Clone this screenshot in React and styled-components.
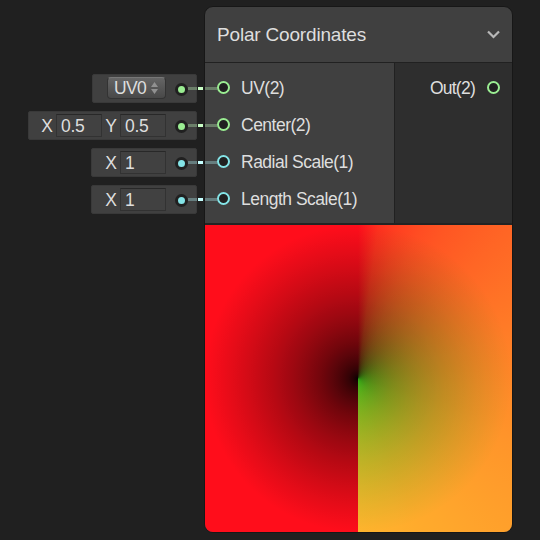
import React from 'react';
import styled, { createGlobalStyle } from 'styled-components';

const GREEN = { port: '#9aed92', wire: '#6b7f69', bright: '#caffc6' };
const CYAN = { port: '#84e4e7', wire: '#667d7e', bright: '#c5ffff' };

const GlobalStyle = createGlobalStyle`
  * { box-sizing: border-box; }
  body {
    margin: 0;
    background: #202020;
    overflow: hidden;
  }
`;

const Canvas = styled.main`
  display: flex;
  align-items: flex-start;
  width: 540px;
  height: 540px;
  padding-top: 6px;
  background: #202020;
  color: #dedede;
  font-family: "Liberation Sans", Arial, sans-serif;
  font-size: 17.5px;
  line-height: 20px;
  white-space: nowrap;
`;

const Inputs = styled.div`
  display: flex;
  flex-direction: column;
  align-items: flex-end;
  gap: 8px;
  width: 204px;
  padding-top: 68px;
`;

const InputRow = styled.div`
  display: flex;
  align-items: center;
  height: 29px;
`;

const InputPanel = styled.div`
  display: flex;
  align-items: center;
  justify-content: flex-end;
  width: ${({ $width }) => $width}px;
  height: 29px;
  border: 1px solid #393939;
  border-radius: 2px;
  background: #404040;
`;

const AxisLabel = styled.span`
  width: 12px;
  margin-right: 3px;
  text-align: center;
`;

const Field = styled.span`
  width: 46px;
  height: 23px;
  margin-right: ${({ $gap }) => $gap}px;
  padding-left: 4px;
  border: 1px solid #323232;
  border-top-color: #282828;
  background: #414141;
  line-height: 22px;
  letter-spacing: -0.3px;
`;

const Dropdown = styled.span`
  display: flex;
  align-items: center;
  justify-content: space-between;
  width: 59px;
  height: 22px;
  margin: 0 9px 1px 0;
  padding: 0 7px 0 6px;
  border: 1px solid #333;
  border-top-color: #777;
  border-radius: 4px;
  background: linear-gradient(#656565, #484848);
  letter-spacing: -0.6px;
`;

const Plug = styled.span`
  flex: none;
  width: 13px;
  height: 13px;
  margin: 1px 8px 0 0;
  border: 3px solid #202020;
  border-radius: 50%;
  background: ${({ $color }) => $color};
`;

const Wire = styled.span`
  flex: none;
  width: ${({ $width }) => $width}px;
  height: 3px;
  background: ${({ $color }) => $color};
`;

const PanelWire = styled(Wire)`
  margin-left: -9px;
`;

const PortWire = styled(Wire)`
  margin-top: 2px;
`;

const WireGap = styled.span`
  width: 1px;
`;

const Node = styled.section`
  width: 309px;
  height: 527px;
  border: 1px solid #171717;
  border-radius: 9px;
  background: #404040;
  overflow: hidden;
`;

const Header = styled.header`
  display: flex;
  align-items: center;
  justify-content: space-between;
  height: 56px;
  padding: 0 12px 0 12px;
  border-bottom: 1px solid #212121;
  font-size: 19px;
`;

const Title = styled.span`
  letter-spacing: -0.18px;
`;

const Ports = styled.div`
  display: flex;
  height: 162px;
  border-bottom: 2px solid #232323;
`;

const InPorts = styled.div`
  flex: 1;
  padding-top: 6px;
`;

const OutPorts = styled.div`
  width: 118px;
  padding: 6px 12px 0 0;
  border-left: 1px solid #212121;
  background: #2e2e2e;
`;

const PortRow = styled.div`
  display: flex;
  align-items: center;
  justify-content: ${({ $end }) => ($end ? 'flex-end' : 'flex-start')};
  height: 37px;
`;

const Ring = styled.span`
  flex: none;
  width: 13px;
  height: 13px;
  border: 2px solid ${({ $color }) => $color};
  border-radius: 50%;
  background: #212121;
`;

const PortLabel = styled.span`
  margin: ${({ $end }) => ($end ? '0 12px 0 0' : '0 0 0 11px')};
  letter-spacing: ${({ $end }) => ($end ? '-0.75px' : '-0.5px')};
`;

const srgb = (v) => (v <= 0.0031308 ? v * 12.92 : 1.055 * v ** (1 / 2.4) - 0.055);

const angleStops = Array.from({ length: 25 }, (_, i) => {
  const g = srgb((i / 24) * 0.5);
  return `rgb(${Math.round(g * 50)}, ${Math.round(g * 240)}, ${Math.round(g * 28)}) ${i * 7.5}deg`;
}).join(', ');

const radiusStops = Array.from({ length: 33 }, (_, i) => {
  const t = (i / 32) ** 2;
  const r = t ** 0.57;
  return `rgb(${Math.round(r * 255)}, ${Math.round(r * 13)}, ${Math.round(r * 27)}) ${(t * 100).toFixed(2)}%`;
}).join(', ');

const Preview = styled.div`
  height: 307px;
  background:
    conic-gradient(from 0deg at 153px 153.5px, ${angleStops}, #000 180deg),
    radial-gradient(circle 153.5px at 153px 153.5px, ${radiusStops});
  background-blend-mode: screen;
`;

const inputs = [
  { label: 'UV(2)', color: GREEN, width: 105, option: 'UV0' },
  { label: 'Center(2)', color: GREEN, width: 169, fields: [['X', '0.5'], ['Y', '0.5']] },
  { label: 'Radial Scale(1)', color: CYAN, width: 106, fields: [['X', '1']] },
  { label: 'Length Scale(1)', color: CYAN, width: 106, fields: [['X', '1']] },
];

export default function App() {
  return (
    <>
      <GlobalStyle />
      <Canvas>
        <Inputs>
          {inputs.map(({ label, color, width, option, fields = [] }) => (
            <InputRow key={label}>
              <InputPanel $width={width}>
                {option && (
                  <Dropdown>
                    {option}
                    <svg width="7" height="12" viewBox="0 0 7 12" fill="#919191">
                      <path d="M3.5 0 7 5H0ZM0 7h7l-3.5 5Z" />
                    </svg>
                  </Dropdown>
                )}
                {fields.map(([axis, value], i) => (
                  <React.Fragment key={axis}>
                    <AxisLabel>{axis}</AxisLabel>
                    <Field $gap={i === fields.length - 1 ? 9 : 3}>{value}</Field>
                  </React.Fragment>
                ))}
                <Plug $color={color.port} />
              </InputPanel>
              <PanelWire $width={9} $color={color.wire} />
              <WireGap />
              <Wire $width={5} $color={color.bright} />
              <WireGap />
            </InputRow>
          ))}
        </Inputs>
        <Node>
          <Header>
            <Title>Polar Coordinates</Title>
            <svg width="13" height="9" viewBox="0 0 13 9" fill="none" stroke="#b8b8b8" strokeWidth="2.2">
              <path d="m1 1.5 5.5 5.5L12 1.5" />
            </svg>
          </Header>
          <Ports>
            <InPorts>
              {inputs.map(({ label, color }) => (
                <PortRow key={label}>
                  <PortWire $width={12} $color={color.wire} />
                  <Ring $color={color.port} />
                  <PortLabel>{label}</PortLabel>
                </PortRow>
              ))}
            </InPorts>
            <OutPorts>
              <PortRow $end>
                <PortLabel $end>Out(2)</PortLabel>
                <Ring $color={GREEN.port} />
              </PortRow>
            </OutPorts>
          </Ports>
          <Preview />
        </Node>
      </Canvas>
    </>
  );
}
